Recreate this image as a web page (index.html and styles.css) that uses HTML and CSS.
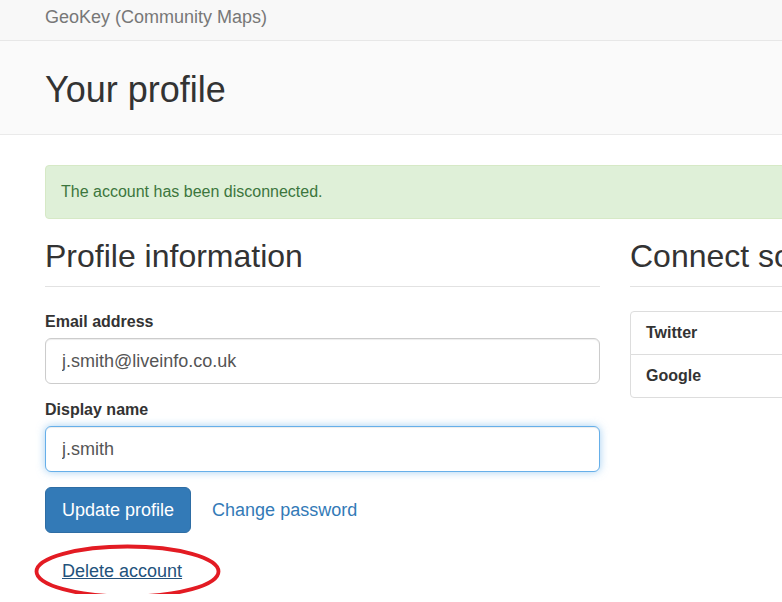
FILE: index.html
```html
<!DOCTYPE html>
<html lang="en">
<head>
<meta charset="utf-8">
<title>Your profile - GeoKey</title>
<link rel="stylesheet" href="styles.css">
</head>
<body>
<nav class="navbar">
  <div class="container">
    <a class="brand" href="#">GeoKey (Community Maps)</a>
  </div>
</nav>
<header class="page-head">
  <div class="container">
    <h1 class="page-title">Your profile</h1>
  </div>
</header>
<main class="container">
  <div class="alert-success">The account has been disconnected.</div>
  <div class="row">
    <section class="col">
      <h2 class="section-title">Profile information</h2>
      <form class="profile-form">
        <div class="form-group">
          <label class="form-label" for="email">Email address</label>
          <input class="form-input" id="email" type="text" value="j.smith@liveinfo.co.uk">
        </div>
        <div class="form-group">
          <label class="form-label" for="display">Display name</label>
          <input class="form-input is-focused" id="display" type="text" value="j.smith">
        </div>
        <div class="actions">
          <button class="btn btn-primary" type="button">Update profile</button>
          <a class="btn btn-link" href="#">Change password</a>
        </div>
        <div class="delete-row">
          <a class="btn btn-link link-delete" href="#">Delete account</a>
          <svg class="mark-circle" width="190" height="58" viewBox="0 0 190 58" aria-hidden="true">
            <ellipse cx="94.5" cy="28.5" rx="91" ry="25" fill="none" stroke="#e31b23" stroke-width="3.8"/>
          </svg>
        </div>
      </form>
    </section>
    <section class="col">
      <h2 class="section-title">Connect social accounts</h2>
      <ul class="list-group">
        <li class="list-item">Twitter</li>
        <li class="list-item">Google</li>
      </ul>
    </section>
  </div>
</main>
</body>
</html>
```

FILE: styles.css
```css
html {
  min-width: 1230px;
  overflow: hidden;
  background: #fff;
}
body {
  margin: 0;
  font-family: "Liberation Sans", Arial, sans-serif;
  font-size: 16px;
  line-height: 1.42857;
  color: #333;
}
* { box-sizing: border-box; }

.container {
  width: 1170px;
  margin: 0 auto;
  padding: 0 15px;
}

.navbar {
  height: 41px;
  background: #f8f8f8;
  border-bottom: 1px solid #e7e7e7;
}
.brand {
  display: block;
  padding-top: 7px;
  font-size: 18px;
  line-height: 20px;
  color: #777;
  text-decoration: none;
}

.page-head {
  background: #fafafa;
  border-bottom: 1px solid #eaeaea;
  padding: 29px 0 24px;
}
.page-title {
  margin: 0;
  font-size: 36px;
  font-weight: 400;
  line-height: 40px;
  color: #333;
}

.alert-success {
  margin-top: 30px;
  padding: 15px;
  line-height: 22px;
  background: #dff0d8;
  border: 1px solid #d6e9c6;
  border-radius: 4px;
  color: #3c763d;
}

.row {
  display: grid;
  grid-template-columns: 555px 555px;
  column-gap: 30px;
}

.section-title {
  margin: 20px 0 0;
  padding-bottom: 12px;
  font-size: 32px;
  font-weight: 400;
  line-height: 35px;
  color: #333;
  border-bottom: 1px solid #e2e2e2;
  white-space: nowrap;
}

.profile-form {
  margin-top: 23px;
}
.form-group {
  margin-bottom: 14px;
}
.form-label {
  display: block;
  margin-bottom: 5px;
  font-weight: 700;
  line-height: 23px;
}
.form-input {
  display: block;
  width: 100%;
  height: 46px;
  padding: 10px 16px;
  font-family: inherit;
  font-size: 18px;
  line-height: 24px;
  color: #555;
  background: #fff;
  border: 1px solid #ccc;
  border-radius: 6px;
  box-shadow: inset 0 1px 1px rgba(0,0,0,.075);
  outline: none;
}
.form-input.is-focused {
  border-color: #66afe9;
  box-shadow: inset 0 1px 1px rgba(0,0,0,.075), 0 0 8px rgba(102,175,233,.6);
}

.actions {
  display: flex;
  gap: 4px;
  margin-top: 15px;
}
.btn {
  display: inline-block;
  padding: 10px 16px;
  font-family: inherit;
  font-size: 18px;
  line-height: 24px;
  border: 1px solid transparent;
  border-radius: 6px;
  cursor: pointer;
  text-decoration: none;
}
.btn-primary {
  color: #fff;
  background: #337ab7;
  border-color: #2e6da4;
}
.btn-link {
  color: #337ab7;
  background: transparent;
}

.delete-row {
  position: relative;
  margin-top: 15px;
}
.link-delete {
  color: #23527c;
  text-decoration: underline;
}
.mark-circle {
  position: absolute;
  left: -12px;
  top: -5px;
  pointer-events: none;
}

.list-group {
  list-style: none;
  margin: 24px 0 0;
  padding: 0;
}
.list-item {
  padding: 10px 15px;
  font-weight: 700;
  line-height: 22px;
  background: #fff;
  border: 1px solid #ddd;
  margin-bottom: -1px;
}
.list-item:first-child {
  border-radius: 4px 4px 0 0;
}
.list-item:last-child {
  border-radius: 0 0 4px 4px;
  margin-bottom: 0;
}
```
